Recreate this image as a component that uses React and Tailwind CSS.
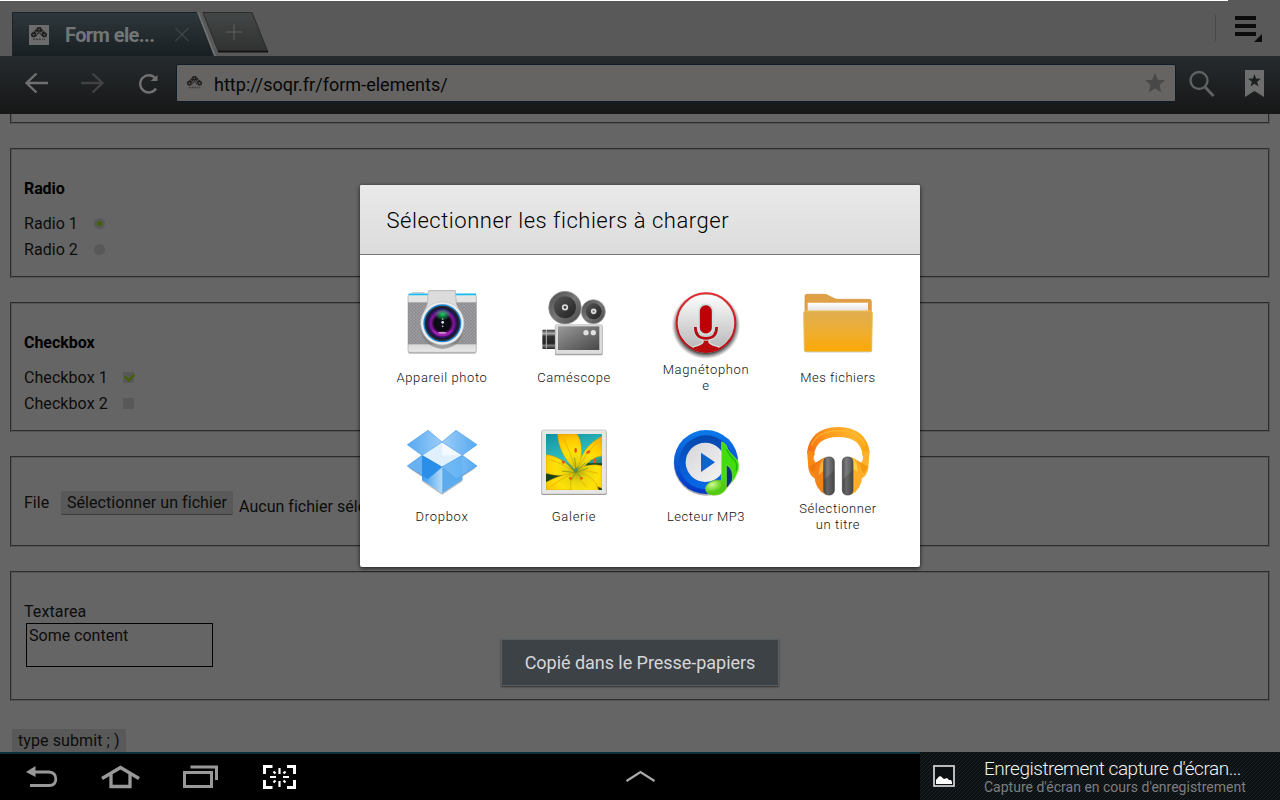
import React from 'react';

function Fieldset({ className = '', children }) {
  return (
    <div className={'shrink-0 border border-t-[#2d2d2d] border-l-[#2d2d2d] border-r-[#555] border-b-[#555] ' + className}>
      <div className="h-full border border-t-[#555] border-l-[#555] border-r-[#2d2d2d] border-b-[#2d2d2d] pl-3">{children}</div>
    </div>
  );
}

function SiteLogo({ className }) {
  return (
    <svg className={className} viewBox="0 0 20 20">
      <path d="M3 10.500L10 3l7 7.500" fill="none" stroke="#252224" strokeWidth="3.200" strokeDasharray="2 .6" />
      <path d="M6.800 10.800L10 7.300l3.200 3.500" fill="none" stroke="#2a2628" strokeWidth="1.400" strokeDasharray="1.500 .4" />
      <g fill="#555" stroke="#1f1c1e" strokeWidth="1.500">
        <circle cx="4.600" cy="9.700" r="1.800" />
        <circle cx="10" cy="4.400" r="1.600" />
        <circle cx="15.400" cy="9.700" r="1.800" />
      </g>
      <path d="M4 14.300h1.600M6.800 14.300h2M9.800 14.300h2M13 14.300h1M15 14.300h1" stroke="#3a3a3a" strokeWidth="1.600" />
    </svg>
  );
}

function CameraIcon() {
  return (
    <svg className="size-[72px] shrink-0" viewBox="48 21 216 216">
      <defs>
        <linearGradient id="camBody" x1="0" y1="0" x2="0" y2="1"><stop offset="0" stopColor="#e6e6e6" /><stop offset=".8" stopColor="#d2d2d2" /><stop offset="1" stopColor="#e8e8e8" /></linearGradient>
        <radialGradient id="camLens"><stop offset="0" stopColor="#10101c" /><stop offset=".5" stopColor="#090912" /><stop offset=".72" stopColor="#8d14a0" /><stop offset=".85" stopColor="#3a1270" /><stop offset="1" stopColor="#141426" /></radialGradient>
        <radialGradient id="camGreen"><stop offset="0" stopColor="#18d060" /><stop offset="1" stopColor="#18d060" stopOpacity="0" /></radialGradient>
        <pattern id="camGrip" width="10" height="10" patternUnits="userSpaceOnUse"><rect width="10" height="10" fill="#a2a2a6" /><path d="M0 2.500h6M5 7.500h5" stroke="#707076" strokeWidth="3" /></pattern>
      </defs>
      <path d="M64 40l3-4h35l4 5z" fill="#cfcfcf" />
      <rect x="54" y="47" width="205" height="174" rx="6" fill="#777" opacity=".55" />
      <rect x="54" y="43" width="205" height="174" rx="6" fill="url(#camBody)" stroke="#aaa" strokeWidth="2" />
      <path d="M56 43h202" stroke="#19bdf0" strokeWidth="5" />
      <rect x="54" y="67" width="205" height="126" fill="url(#camGrip)" />
      <path d="M117 31h79l4 44 20 45q10 79-63 87q-72-8-66-86l20-46z" fill="#777" opacity=".6" />
      <path d="M115 32h81l3 40 20 50H92l20-50z" fill="#dcdcdc" stroke="#b5b5b5" strokeWidth="2" />
      <circle cx="157" cy="130" r="65" fill="#ededed" stroke="#bdbdbd" strokeWidth="2" />
      <circle cx="157" cy="130" r="57" fill="#2489d8" />
      <circle cx="157" cy="130" r="53" fill="#252a35" />
      <circle cx="157" cy="130" r="48" fill="url(#camLens)" />
      <ellipse cx="158" cy="103" rx="25" ry="18" fill="url(#camGreen)" />
      <path d="M124 148a37 37 0 0 0 67 0q-33 20-67 0z" fill="#c52bc9" opacity=".5" />
      <ellipse cx="157" cy="158" rx="12" ry="3" fill="#f5c2f2" opacity=".7" />
      <circle cx="158" cy="127" r="4" fill="#d3f3f1" /><circle cx="158" cy="139" r="2.500" fill="#ccc" /><circle cx="158" cy="117" r="2.500" fill="#a8dcd0" />
    </svg>
  );
}

function CamcorderIcon() {
  return (
    <svg className="size-[72px] shrink-0" viewBox="54 21 216 216">
      <defs>
        <linearGradient id="reel" x1="0" y1="0" x2="1" y2="1"><stop offset="0" stopColor="#4a4a4a" /><stop offset=".5" stopColor="#777" /><stop offset="1" stopColor="#454545" /></linearGradient>
        <linearGradient id="reelIn" x1="0" y1="0" x2="1" y2="1"><stop offset="0" stopColor="#555" /><stop offset="1" stopColor="#222" /></linearGradient>
        <linearGradient id="box" x1="0" y1="0" x2="1" y2="1"><stop offset="0" stopColor="#999" /><stop offset="1" stopColor="#484848" /></linearGradient>
        <linearGradient id="tube" x1="0" y1="0" x2="0" y2="1"><stop offset="0" stopColor="#333" /><stop offset=".2" stopColor="#aaa" /><stop offset=".35" stopColor="#333" /><stop offset=".7" stopColor="#222" /><stop offset=".82" stopColor="#777" /><stop offset="1" stopColor="#222" /></linearGradient>
      </defs>
      <circle cx="135" cy="83" r="49" fill="url(#reel)" stroke="#999" strokeWidth="2" />
      <circle cx="135" cy="82" r="33" fill="url(#reelIn)" />
      <circle cx="135" cy="82" r="7" fill="#444" stroke="#ddd" strokeWidth="5" />
      <circle cx="220" cy="95" r="36" fill="url(#reel)" stroke="#999" strokeWidth="2" />
      <circle cx="221" cy="94" r="24" fill="url(#reelIn)" />
      <circle cx="221" cy="94" r="6" fill="#777" stroke="#ddd" strokeWidth="5" />
      <rect x="67" y="149" width="40" height="58" rx="3" fill="url(#tube)" />
      <path d="M79 150v56" stroke="#bbb" strokeWidth="3" />
      <rect x="105" y="138" width="143" height="88" rx="4" fill="#999" />
      <rect x="106" y="134" width="141" height="88" rx="4" fill="#ddd" stroke="#bbb" strokeWidth="2" />
      <rect x="114" y="139" width="124" height="71" fill="url(#box)" />
      <circle cx="198" cy="158" r="8" fill="#e0e0e0" /><circle cx="220" cy="158" r="8" fill="#e0e0e0" />
    </svg>
  );
}

function MicIcon() {
  return (
    <svg className="size-[72px] shrink-0" viewBox="60 21 216 216">
      <defs>
        <linearGradient id="micBg" x1="0" y1="0" x2="0" y2="1"><stop offset="0" stopColor="#fff" /><stop offset="1" stopColor="#b4b4b4" /></linearGradient>
        <linearGradient id="micRim" x1="0" y1="0" x2="0" y2="1"><stop offset="0" stopColor="#e62a30" /><stop offset="1" stopColor="#b80810" /></linearGradient>
        <radialGradient id="micSh"><stop offset=".82" stopColor="#222" stopOpacity=".9" /><stop offset="1" stopColor="#555" stopOpacity="0" /></radialGradient>
        <clipPath id="micClip"><circle cx="168" cy="128" r="86" /></clipPath>
      </defs>
      <ellipse cx="168" cy="136" rx="103" ry="101" fill="url(#micSh)" />
      <circle cx="168" cy="128" r="87" fill="url(#micBg)" stroke="#c9dcdc" strokeWidth="7" />
      <g clipPath="url(#micClip)">
        <path d="M159 172h18v15q5 7 28 13l24 20H107l24-20q25-6 28-13z" fill="#b90a0e" stroke="#d5e2e2" strokeWidth="4" />
      </g>
      <circle cx="168" cy="128" r="88" fill="none" stroke="url(#micRim)" strokeWidth="6" />
      <path d="M136 142q0 34 32 34t32-34" fill="none" stroke="#cedfdf" strokeWidth="13" />
      <rect x="147" y="73" width="41" height="90" rx="20" fill="#bd0006" stroke="#d0e0e0" strokeWidth="5" />
      <path d="M136 141q0 34 32 34t32-34" fill="none" stroke="#b80a10" strokeWidth="8" />
    </svg>
  );
}

function FolderIcon() {
  return (
    <svg className="size-[72px] shrink-0" viewBox="456 21 216 216">
      <defs>
        <linearGradient id="fold" x1="0" y1="0" x2="0" y2="1"><stop offset="0" stopColor="#dfac50" /><stop offset=".5" stopColor="#eeae32" /><stop offset="1" stopColor="#fda805" /></linearGradient>
        <linearGradient id="paper" x1="0" y1="0" x2="0" y2="1"><stop offset="0" stopColor="#fff" /><stop offset="1" stopColor="#ddd" /></linearGradient>
      </defs>
      <path d="M465 100V48q0-5 5-5h52q8 0 14 4l14 7q6 4 16 4h92q6 0 6 6v40z" fill="#e0a045" stroke="#d39138" strokeWidth="2" />
      <path d="M473 68h181v30H473z" fill="url(#paper)" />
      <rect x="463" y="97" width="203" height="120" rx="6" fill="#777" opacity=".7" />
      <path d="M461 99q0-6 6-6h194q6 0 6 6l-2 110q0 5-5 5H468q-5 0-5-5z" fill="url(#fold)" stroke="#ecc255" strokeWidth="3" />
    </svg>
  );
}

function DropboxIcon() {
  return (
    <svg className="size-[72px] shrink-0" viewBox="48 18 216 216">
      <defs>
        <linearGradient id="dbA" x1="0" y1="0" x2="1" y2="0"><stop offset="0" stopColor="#57a8f0" /><stop offset="1" stopColor="#9bcdf8" /></linearGradient>
        <linearGradient id="dbB" x1="0" y1="0" x2="1" y2="0"><stop offset="0" stopColor="#9bcdf8" /><stop offset="1" stopColor="#56a9f0" /></linearGradient>
        <linearGradient id="dbC" x1="0" y1="0" x2="1" y2="0"><stop offset="0" stopColor="#3b9bed" /><stop offset="1" stopColor="#b5dbf9" /></linearGradient>
      </defs>
      <path d="M52 142L96 170v14l60 40 61-40v-14l44-28-60 22-45 54-44-54z" fill="#777" opacity=".5" />
      <path d="M96 106L156 66l61 40v73l-61 41-60-41z" fill="#8cc5f6" />
      <path d="M96 106l60 35v79l-60-41z" fill="url(#dbC)" />
      <path d="M217 106l-61 35v79l61-41z" fill="#5babed" />
      <path d="M156 66l61 40-61 35-60-35z" fill="#e0f0fd" />
      <path d="M156 66l61 40-61 0z" fill="#f4faff" />
      <path d="M114 31l42 35-60 40-44-32z" fill="url(#dbA)" stroke="#4ba0ec" strokeWidth="2" />
      <path d="M198 31l-42 35 61 40 44-32z" fill="url(#dbB)" stroke="#4ba0ec" strokeWidth="2" />
      <path d="M96 106l60 35-43 36-61-39z" fill="#69b2f2" stroke="#4499e8" strokeWidth="2" />
      <path d="M96 106l60 35-43 36-17-10z" fill="#298fe9" />
      <path d="M217 106l-61 35 43 36 62-39z" fill="url(#dbB)" stroke="#4499e8" strokeWidth="2" />
      <path d="M156 141l43 36 18-10v-61z" fill="#5fb0f2" opacity=".65" />
      <path d="M156 141v78" stroke="#a7d5f8" strokeWidth="2" />
    </svg>
  );
}

function GalleryIcon() {
  return (
    <svg className="size-[72px] shrink-0" viewBox="444 18 216 216">
      <defs>
        <linearGradient id="sky" x1="0" y1="0" x2=".3" y2="1"><stop offset="0" stopColor="#1590a0" /><stop offset=".55" stopColor="#2fc4c4" /><stop offset="1" stopColor="#123b10" /></linearGradient>
        <radialGradient id="petal" gradientUnits="userSpaceOnUse" cx="560" cy="155" r="125"><stop offset="0" stopColor="#a8ad18" /><stop offset=".25" stopColor="#e9d60c" /><stop offset=".5" stopColor="#fde20a" /><stop offset=".75" stopColor="#ffcd00" /><stop offset="1" stopColor="#f3a800" /></radialGradient>
        <clipPath id="pic"><rect x="468" y="42" width="168" height="168" /></clipPath>
      </defs>
      <rect x="454" y="32" width="196" height="193" rx="5" fill="#777" opacity=".8" />
      <rect x="455" y="30" width="194" height="192" rx="5" fill="#e6e6e6" stroke="#bbb" strokeWidth="2" />
      <g clipPath="url(#pic)">
        <rect x="468" y="42" width="168" height="168" fill="url(#sky)" />
        <path d="M468 135h50v75h-50zM590 130h50v80h-50z" fill="#174312" />
        <g fill="url(#petal)" stroke="#d39b00" strokeWidth="1.5">
          <path d="M553 148Q505 98 503 42h58q22 32 8 95z" />
          <path d="M565 143q10-63 71-94v58q-34 4-64 44z" />
          <path d="M552 153q-45-48-84-49v56q43 12 84 2z" />
          <path d="M562 147q38-18 74-10v68q-38-12-72-45z" />
          <path d="M553 158q-55 10-85 29v23h78z" />
          <path d="M552 158q-16 26-8 54h82q-8-42-64-57z" />
        </g>
        <path d="M520 55q20 38 34 84M480 118q35 12 66 32M620 68q-34 32-50 68M624 160q-30-8-54-10M482 200q35-25 62-38M590 200q-22-18-33-36" fill="none" stroke="#e69d00" strokeWidth="3" opacity=".6" />
        <path d="M558 158l-28-30M558 158l-4-45M558 158l28-30M558 158l-42-5M558 158l-15 24M558 158l20 18M558 158l36-14" stroke="#759018" strokeWidth="2.200" />
        <g fill="#ef5410"><ellipse cx="557" cy="91" rx="4" ry="8" /><ellipse cx="595" cy="96" rx="7" ry="4" transform="rotate(-30 595 96)" /><ellipse cx="615" cy="122" rx="4" ry="8" /><circle cx="520" cy="126" r="5" /><circle cx="541" cy="175" r="4" /><circle cx="574" cy="175" r="4" /></g>
      </g>
    </svg>
  );
}

function Mp3Icon() {
  return (
    <svg className="size-[72px] shrink-0" viewBox="60 18 216 216">
      <defs>
        <linearGradient id="disc" x1="0" y1="0" x2="0" y2="1"><stop offset="0" stopColor="#0b7aea" /><stop offset="1" stopColor="#0636c4" /></linearGradient>
        <linearGradient id="ring" x1="0" y1="0" x2="0" y2="1"><stop offset="0" stopColor="#0647ad" /><stop offset="1" stopColor="#0869e6" /></linearGradient>
        <linearGradient id="plate" x1="0" y1="0" x2="1" y2="1"><stop offset="0" stopColor="#d5d5d9" /><stop offset="1" stopColor="#f5f5f5" /></linearGradient>
        <radialGradient id="noteG" cx=".35" cy=".25"><stop offset="0" stopColor="#d2fa8e" /><stop offset="1" stopColor="#51cb10" /></radialGradient>
      </defs>
      <circle cx="168" cy="130" r="97" fill="#334" opacity=".4" />
      <circle cx="168" cy="126" r="96" fill="url(#disc)" />
      <circle cx="168" cy="127" r="81" fill="url(#ring)" />
      <circle cx="166" cy="127" r="59" fill="url(#plate)" />
      <path d="M153 98l42 29-42 29z" fill="#0964cd" />
      <path d="M218 105q35 25 34 65l-20 32-17 2z" fill="#073584" />
      <path d="M215 66q13 2 18 21 7 12 27 31 11 15 4 35-7 21-18 34 8-39-17-53v58q-3 15-17 17l2-15z" fill="#43dc0d" stroke="#91ef49" strokeWidth="2" />
      <path d="M229 87q9 20 27 36 8 14 2 30" fill="none" stroke="#1cb909" strokeWidth="4" />
      <ellipse cx="198" cy="203" rx="32" ry="22" transform="rotate(-12 198 203)" fill="url(#noteG)" stroke="#72c51e" strokeWidth="2" />
    </svg>
  );
}

function HeadphonesIcon() {
  return (
    <svg className="size-[72px] shrink-0" viewBox="456 18 216 216">
      <defs>
        <linearGradient id="band" x1="0" y1="0" x2="1" y2="0"><stop offset="0" stopColor="#f36b12" /><stop offset=".3" stopColor="#ff981b" /><stop offset=".75" stopColor="#ffb42b" /><stop offset="1" stopColor="#f5a00d" /></linearGradient>
        <linearGradient id="cup" x1="0" y1="0" x2="1" y2="0"><stop offset="0" stopColor="#4c4c4e" /><stop offset=".35" stopColor="#7d7d7f" /><stop offset="1" stopColor="#515153" /></linearGradient>
      </defs>
      <path d="M471 98q9-75 94-77 85 2 94 77l-21 8q-5-54-73-55-68 1-73 55z" fill="url(#band)" />
      <path d="M484 76q20-44 81-44 61 0 81 44" fill="none" stroke="#ffc33d" strokeWidth="5" opacity=".5" />
      <path d="M471 93q12-4 24 8-9 14 1 26l14 29-12 22q-21-12-23-35z" fill="#f98a14" />
      <path d="M659 93q-12-4-24 8 9 14-1 26l-14 29 12 22q21-12 23-35z" fill="#ffb12c" />
      <path d="M476 140l34-20v18l-22 22z" fill="#ee7a0b" />
      <path d="M654 140l-34-20v18l22 22z" fill="#f4990f" />
      <path d="M527 112q-31 8-34 53 2 45 34 59z" fill="#f58314" />
      <path d="M603 112q31 8 34 53-2 45-34 59z" fill="#ffad29" />
      <path d="M527 112q-18 8-21 53l21-18z" fill="#ffad3e" /><path d="M603 112q20 12 20 43l-20-13z" fill="#ffd14b" />
      <rect x="521" y="111" width="32" height="114" rx="14" fill="url(#cup)" stroke="#444" strokeWidth="2" />
      <rect x="577" y="111" width="32" height="114" rx="14" fill="url(#cup)" stroke="#444" strokeWidth="2" />
      <path d="M522 180l31-29v60q0 14-16 13-15 0-15-13zM578 180l30-29v60q0 14-15 13-15 0-15-13z" fill="#333" opacity=".3" />
    </svg>
  );
}

const apps = [
  ['Appareil photo', CameraIcon, 'tracking-[0.6px]'],
  ['Caméscope', CamcorderIcon, 'tracking-[0.6px]'],
  ['Magnétophone', MicIcon, 'tracking-[0.65px]'],
  ['Mes fichiers', FolderIcon, 'tracking-[0.5px]'],
  ['Dropbox', DropboxIcon, 'tracking-[0.75px]'],
  ['Galerie', GalleryIcon, 'tracking-[0.7px]'],
  ['Lecteur MP3', Mp3Icon, 'tracking-[0.52px]'],
  ['Sélectionner un titre', HeadphonesIcon, 'tracking-[0.58px]'],
];

function TabBar() {
  return (
    <div className="flex h-14 shrink-0 border-t border-[#595959] bg-[#595959]">
      <div className="relative h-[55px] w-[270px]">
        <svg className="absolute left-0 top-0" width="270" height="55" viewBox="0 1 270 55">
          <defs>
            <linearGradient id="tab" x1="0" y1="0" x2="0" y2="1"><stop offset="0" stopColor="#2e383c" /><stop offset="1" stopColor="#191f22" /></linearGradient>
            <linearGradient id="newTab" x1="0" y1="0" x2="0" y2="1"><stop offset="0" stopColor="#444747" /><stop offset="1" stopColor="#303030" /></linearGradient>
          </defs>
          <path d="M12 12H197L214 56H12z" fill="url(#tab)" />
          <path d="M12.500 56V12.500H197" fill="none" stroke="#1e2426" />
          <path d="M198 12L215 56" stroke="#737373" strokeWidth="1.500" />
          <path d="M203 12.500H252L268 52H218.500z" fill="url(#newTab)" stroke="#2b2b2b" />
          <path d="M218 51.500H268" stroke="#111" strokeWidth="1.500" />
          <path d="M226 32h16M234 24v16" stroke="#5e5e5e" />
          <path d="M175.500 28l13 13M188.500 28l-13 13" stroke="#525658" />
        </svg>
        <div className="relative flex h-full items-center pl-[29px] pt-3">
          <div className="size-5 bg-[#6c6c6c]"><SiteLogo className="size-5" /></div>
          <span className="ml-4 text-[20px] font-bold leading-6 tracking-[-0.6px] text-[#737677]">Form ele...</span>
        </div>
      </div>
      <div className="ml-auto mt-[14px] h-[26px] w-px bg-[#484848]" />
      <svg className="ml-[18px] mr-4 mt-[14px]" width="30" height="28" viewBox="0 0 30 28">
        <path d="M1 3h21M1 11h21M1 19h21" stroke="#0b0b0b" strokeWidth="4" />
        <path d="M28 19v8h-8z" fill="#0b0b0b" />
      </svg>
    </div>
  );
}

function Toolbar() {
  return (
    <div className="flex h-[58px] shrink-0 items-center bg-linear-to-b from-[#262b2e] to-[#161717]">
      <svg className="shrink-0" width="176" height="58" viewBox="0 56 176 58" fill="none">
        <path d="M48 83H27M36.500 73.500L26.500 83L36.500 92.500" stroke="#707070" strokeWidth="2.400" />
        <path d="M81 83h21M92.500 73.500l10 9.500-10 9.500" stroke="#414242" strokeWidth="2.400" />
        <path d="M155.500 78.500A8.600 8.600 0 1 0 156 88.500" stroke="#707070" strokeWidth="2.400" />
        <path d="M157.500 75v6h-7z" fill="#707070" />
      </svg>
      <div className="mb-1 flex h-[38px] w-[1000px] items-center rounded-[2px] border border-[#0d1c28] bg-[#656463] pl-2 pr-[10px]">
        <SiteLogo className="size-[19px]" />
        <span className="ml-[10px] pt-[2px] text-[18px] tracking-[0.02px] text-[#060606]">http://soqr.fr/form-elements/</span>
        <svg className="ml-auto" width="20" height="20" viewBox="0 0 20 20"><path d="M10 0l2.700 6.700 7.300.6-5.500 4.800 1.700 7.100L10 15.400l-6.200 3.800 1.700-7.100L0 7.300l7.300-.6z" fill="#484848" /></svg>
      </div>
      <svg className="shrink-0" width="104" height="58" viewBox="1176 56 104 58">
        <circle cx="1199" cy="80.500" r="8.500" fill="none" stroke="#606162" strokeWidth="2.400" />
        <path d="M1205 87l8.500 9" stroke="#606162" strokeWidth="3" />
        <path d="M1245 70h19v27l-9.500-6-9.500 6z" fill="#6e6e6e" />
        <path d="M1254.500 74l1.600 4.500 4.900.2-3.900 3 1.400 4.800-4-2.800-4 2.800 1.400-4.800-3.900-3 4.900-.2z" fill="#1d2020" />
      </svg>
    </div>
  );
}

function PageContent() {
  return (
    <div className="flex h-[638px] shrink-0 flex-col overflow-hidden bg-[#656565] pl-[10px] pr-[10px] text-[16px] leading-[26px] text-[#0c0c0c]">
      <div className="-mt-[10px] flex flex-col gap-6">
        <Fieldset className="h-5" />
        <Fieldset className="h-[130px]">
          <div className="mb-[9px] pt-[26px] font-bold tracking-[-0.1px] text-black">Radio</div>
          <div className="flex items-center"><span className="w-[70px] tracking-[0.05px]">Radio 1</span><span className="-mt-[2px] flex size-[11px] items-center justify-center rounded-full bg-[#585858]"><span className="size-[5px] rounded-full bg-[#456000]" /></span></div>
          <div className="flex items-center"><span className="w-[70px] tracking-[0.05px]">Radio 2</span><span className="-mt-[2px] size-[11px] rounded-full bg-[#585858]" /></div>
        </Fieldset>
        <Fieldset className="h-[130px]">
          <div className="mb-[9px] pt-[26px] font-bold tracking-[-0.05px] text-black">Checkbox</div>
          <div className="flex items-center"><span className="w-[99px] tracking-[0.07px]">Checkbox 1</span><span className="-mt-[2px] size-[11px] bg-[#585858]"><svg className="block" width="13" height="11" viewBox="0 0 13 11"><path d="M2 4.500l3.800 3.800L11.500 2.500" fill="none" stroke="#456000" strokeWidth="2.400" /></svg></span></div>
          <div className="flex items-center"><span className="w-[99px] tracking-[0.07px]">Checkbox 2</span><span className="-mt-[2px] size-[11px] bg-[#585858]" /></div>
        </Fieldset>
        <Fieldset className="h-[91px]">
          <div className="flex pt-[33px]">
            <span className="w-[37px] leading-6">File</span>
            <span className="h-6 w-[172px] whitespace-nowrap rounded-[2px] border-b border-[#3c3c3c] bg-[#595959] pl-[6px] leading-6 tracking-[0.06px]">Sélectionner un fichier</span>
            <span className="ml-[6px] mt-1 whitespace-nowrap leading-6 tracking-[0.03px]">Aucun fichier sélectionné</span>
          </div>
        </Fieldset>
        <Fieldset className="h-[130px]">
          <div className="pt-[26px] tracking-[0.1px]">Textarea</div>
          <div className="-mt-[2px] ml-[2px] h-11 w-[187px] border border-black pl-[2px] leading-6">Some content</div>
        </Fieldset>
      </div>
      <div className="ml-[2px] mt-7 h-[26px] w-[114px] shrink-0 whitespace-nowrap rounded-[2px] bg-[#595959] pl-[6px] leading-6 tracking-[0.09px]">type submit ; )</div>
    </div>
  );
}

function SystemBar() {
  return (
    <div className="flex h-12 shrink-0 bg-black">
      <div className="h-12 w-[920px] border-t-2 border-[#0d2f3d]">
        <svg width="920" height="46" viewBox="0 754 920 46" fill="none">
          <path d="M30 785.500H49Q55.800 785.500 55.800 779T49 772H35" stroke="#999" strokeWidth="2.800" />
          <path d="M26 772l9.500-6v11z" fill="#999" />
          <path d="M102 778.500l18.500-11 18.500 11M111 774v12.500h19V774" stroke="#999" strokeWidth="3.300" />
          <path d="M184.500 772.500h27v14h-27zM190.500 767h26v13" stroke="#999" strokeWidth="3" />
          <path d="M264.500 774v-7.500h8M287 766.500h7.500v7.500M294.500 780v7.500H287M272.500 787.500h-8V780" stroke="#fff" strokeWidth="3" />
          <path d="M279.500 768v6M279.500 781v6M270 777h6M283 777h6M273.500 771.500l2 2M285.500 771.500l-2 2M273.500 782.500l2-2M285.500 782.500l-2-2" stroke="#fff" strokeWidth="2.200" />
          <path d="M626.500 781l14-9 14 9" stroke="#aaa" strokeWidth="2.200" />
        </svg>
      </div>
      <div className="flex w-[360px] bg-[#0b0f11] bg-[repeating-linear-gradient(135deg,#0d0f10_0px,#0d0f10_2px,#17262c_2px,#17262c_2.828px)]">
        <svg className="ml-3 mt-3" width="24" height="24" viewBox="0 0 24 24"><rect x="2" y="2" width="20" height="20" fill="#0b0f12" stroke="#ccc" strokeWidth="1.800" /><path d="M4 20v-4l3-3.500q2-1 3 1l2 1.500 3-1 2 2h2l1 2v2z" fill="#fff" /></svg>
        <div className="ml-7 pt-[5px]">
          <div className="whitespace-nowrap text-[19px] font-light leading-6 tracking-[-0.48px] text-[#f2f2f2]">Enregistrement capture d'écran...</div>
          <div className="-mt-[2px] whitespace-nowrap text-[14px] leading-4 text-[#7e7e7e]">Capture d'écran en cours d'enregistrement</div>
        </div>
      </div>
    </div>
  );
}

export default function App() {
  return (
    <div className="relative flex h-[800px] w-[1280px] flex-col overflow-hidden bg-[#656565] font-[Roboto,sans-serif]">
      <TabBar />
      <div className="absolute left-0 top-0 h-px w-[1228px] bg-white" />
      <Toolbar />
      <PageContent />
      <SystemBar />
      <div className="absolute left-[360px] top-[185px] h-[382px] w-[560px] overflow-hidden rounded-[2px] bg-white shadow-[0_1px_4px_rgba(0,0,0,0.75)]">
        <div className="flex h-[70px] items-center border-b border-[#777] bg-linear-to-b from-[#e9e9e9] to-[#dcdcdc] pl-[26.5px] pt-[2px] text-[22px] font-light text-black">
          <span className="whitespace-nowrap tracking-[0.53px]">Sélectionner les fichiers à charger</span>
        </div>
        <div className="grid grid-cols-[repeat(4,132px)] gap-y-8 pl-4 pt-8">
          {apps.map(([name, Icon, tracking]) => (
            <div key={name} className="flex h-[107px] flex-col items-center">
              <Icon />
              <div className="mt-[3px] flex h-8 w-[93px] shrink-0 items-center justify-center">
                <span className={'w-full break-words text-center text-[13px] font-light leading-4 text-[#111] ' + tracking}>{name}</span>
              </div>
            </div>
          ))}
        </div>
      </div>
      <div className="absolute left-[501px] top-[639px] flex h-[47px] w-[278px] items-center justify-center rounded-[1px] border border-[#596063] bg-[#3d4247] shadow-[0_1px_2px_rgba(0,0,0,0.55)]">
        <span className="whitespace-nowrap text-[18px] tracking-[-0.04px] text-[#d6d7d8]">Copié dans le Presse-papiers</span>
      </div>
    </div>
  );
}
